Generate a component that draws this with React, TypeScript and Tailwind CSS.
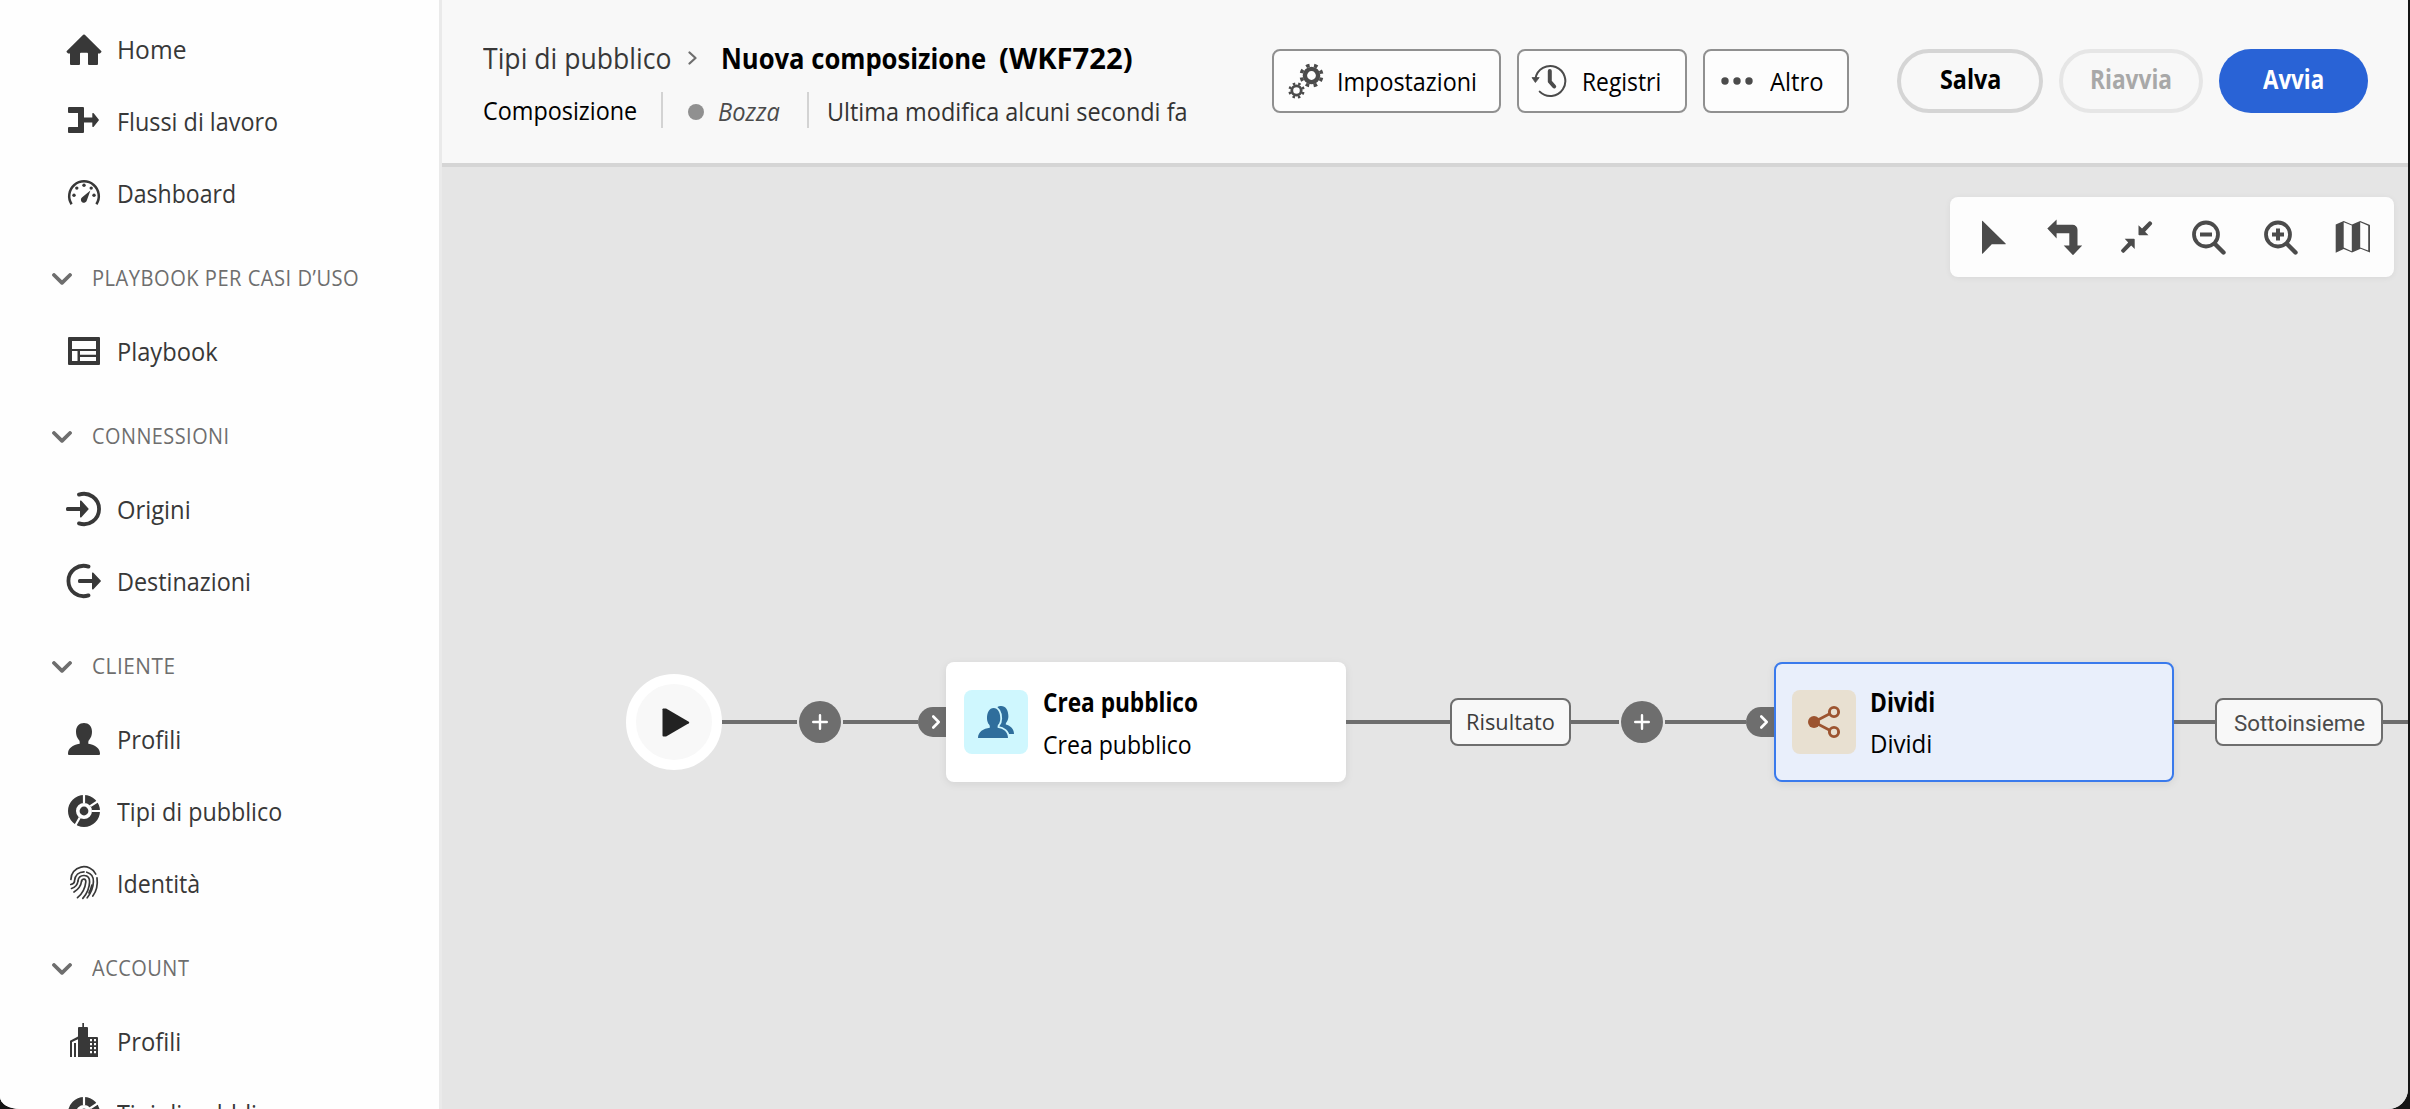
import { useLayoutEffect, useRef, useState, type ReactNode } from "react";

/** One line of text, condensed or expanded to fill the width of its box. */
function Fit({ children, className = "" }: { children: string; className?: string }) {
  const outer = useRef<HTMLSpanElement>(null);
  const inner = useRef<HTMLSpanElement>(null);
  const [scale, setScale] = useState(1);
  useLayoutEffect(() => {
    const measure = () => {
      if (outer.current && inner.current && inner.current.offsetWidth) {
        setScale(outer.current.clientWidth / inner.current.offsetWidth);
      }
    };
    measure();
    document.fonts.ready.then(measure);
  }, []);
  return (
    <span ref={outer} className={`block shrink-0 whitespace-nowrap ${className}`}>
      <span ref={inner} className="inline-block origin-left" style={{ transform: `scaleX(${scale})` }}>
        {children}
      </span>
    </span>
  );
}

function Icon({ children, className = "size-9" }: { children: ReactNode; className?: string }) {
  return (
    <svg viewBox="0 0 36 36" className={`shrink-0 ${className}`} fill="currentColor" aria-hidden="true">
      {children}
    </svg>
  );
}

const HomeIcon = () => (
  <Icon>
    <path d="M17.200 3.800a1.100 1.100 0 0 1 1.600 0L35.200 20a.9.9 0 0 1 0 1.300l-1.300 1.200H32V33a1 1 0 0 1-1 1h-8a1 1 0 0 1-1-1V22.700a.9.9 0 0 0-.9-.9h-6.200a.9.9 0 0 0-.9.9V33a1 1 0 0 1-1 1H5a1 1 0 0 1-1-1V22.500H2.100L.8 21.300a.9.9 0 0 1 0-1.300z" />
  </Icon>
);

const WorkflowIcon = () => (
  <Icon>
    <path d="M3 4h14a1 1 0 0 1 1 1v9.500h8.300V10.800a.8.8 0 0 1 1.400-.6l5 6.200a1 1 0 0 1 0 1.200l-5 6.200a.8.8 0 0 1-1.400-.6V19.500H18V29a1 1 0 0 1-1 1H3a1 1 0 0 1-1-1v-4a1 1 0 0 1 1-1h9V10H3a1 1 0 0 1-1-1V5a1 1 0 0 1 1-1z" />
  </Icon>
);

const DashboardIcon = () => (
  <Icon>
    <path d="M5.600 29.200A14.800 14.800 0 1 1 30.400 29.200" fill="none" stroke="currentColor" strokeWidth="2.500" />
    <circle cx="8" cy="20.300" r="1.700" />
    <circle cx="10.800" cy="13.100" r="1.700" />
    <circle cx="18" cy="10.200" r="1.700" />
    <circle cx="25.200" cy="13.100" r="1.700" />
    <circle cx="28" cy="20.300" r="1.700" />
    <path d="M24.400 15.600 20.800 25.500a3 3 0 1 1-4.600-3.200z" />
  </Icon>
);

const PlaybookIcon = () => (
  <Icon>
    <path
      fillRule="evenodd"
      d="M3 4h30a1 1 0 0 1 1 1v26a1 1 0 0 1-1 1H3a1 1 0 0 1-1-1V5a1 1 0 0 1 1-1zM6 8v8h24V8zM6 18v10h5.500V18zM14 18v3.800h16V18zM14 24v4h16v-4z"
    />
  </Icon>
);

const SourcesIcon = () => (
  <Icon>
    <path d="M13 3.600A15.200 15.200 0 1 1 13 32.400" fill="none" stroke="currentColor" strokeWidth="3.800" strokeLinecap="round" />
    <path d="M1.500 16H14v-5.600a.8.800 0 0 1 1.400-.6l7 7.600a.9.9 0 0 1 0 1.200l-7 7.600a.8.800 0 0 1-1.400-.6V20H1.500A1.500 1.500 0 0 1 0 18.500v-1A1.500 1.500 0 0 1 1.500 16z" />
  </Icon>
);

const DestinationsIcon = () => (
  <Icon>
    <path d="M22.500 3.600A15.200 15.200 0 1 0 22.500 32.400" fill="none" stroke="currentColor" strokeWidth="3.800" strokeLinecap="round" />
    <path d="M13.500 16H26v-5.600a.8.800 0 0 1 1.400-.6l7.300 7.600a.9.9 0 0 1 0 1.200l-7.300 7.600a.8.800 0 0 1-1.400-.6V20H13.500a1.500 1.500 0 0 1-1.500-1.500v-1a1.500 1.500 0 0 1 1.500-1.500z" />
  </Icon>
);

const UserIcon = () => (
  <Icon>
    <path d="M22.300 22.800v-1.700c0-1 .3-1.600 1-2.400 1.700-2 2.700-5 2.700-8C26 5 22.600 2 18 2s-8 3-8 8.700c0 3 1 6 2.700 8 .7.800 1 1.400 1 2.400v1.700C6.500 24 2 27.500 2 32.500V33a1 1 0 0 0 1 1h30a1 1 0 0 0 1-1v-.5c0-5-4.600-8.600-11.700-9.700z" />
  </Icon>
);

const AudienceIcon = () => (
  <Icon>
    <circle cx="18" cy="18" r="12" fill="none" stroke="currentColor" strokeWidth="8" />
    <circle cx="18" cy="18" r="4.400" />
    <path d="M18 10V1M26 18h9M24.300 13.200 33 7.500M13.800 24.500 9 33" stroke="white" strokeWidth="2.200" />
  </Icon>
);

const FingerprintIcon = () => (
  <Icon>
    <g fill="none" stroke="currentColor" strokeWidth="1.700" strokeLinecap="round">
      <path d="M4.900 14.500A13 12.500 0 0 1 29.700 9" />
      <path d="M31 12.800c.8 6 .2 12.200-4.200 18.200" />
      <path d="M8.500 15.800C9 10 13 6.800 18 6.800M20.800 7.200c4.500 1.200 6.800 5 6.600 9.600-.2 5.600-2.400 11.200-6.200 16" />
      <path d="M4.800 19.500c2-.5 3.400-1.500 3.700-3" />
      <path d="M12 15.800c.4-3.400 3-5.400 6.200-5.300 3.500.2 5.500 2.800 5.400 6.400-.2 6-3 12-6.800 16.500" />
      <path d="M5.500 23.500c3.500-1 6-3.800 6.500-7.500" />
      <path d="M15.600 16c.2-1.300 1.200-2 2.400-1.900 1.300.1 2 1.200 1.800 2.900-.6 6-3.800 12-8.300 15.700" />
      <path d="M8 27c4.200-2.500 7-6.500 7.600-11" />
      <path d="M23 28c1.300-2.500 2.300-5 2.900-8" />
    </g>
  </Icon>
);

const BuildingIcon = () => (
  <Icon>
    <path
      fillRule="evenodd"
      d="M16.300 0h1.700v4h3a1 1 0 0 1 1 1v9h9a1 1 0 0 1 1 1v19H12V16.200L6 19v15H4V17.800L12 13.600V5a1 1 0 0 1 1-1h3.300zM24 16v2.200h2V16zm4 0v2.200h2V16zm-4 4v2.200h2V20zm4 0v2.200h2V20zm-4 4v2.200h2V24zm4 0v2.200h2V24zm-4 4v2.200h2V28zm4 0v2.200h2V28zM8 20h2v14H8z"
    />
  </Icon>
);

const SectionChevron = () => (
  <svg viewBox="0 0 20 12" className="h-3 w-5 shrink-0" fill="none" stroke="#6e6e6e" strokeWidth="3.800" strokeLinecap="round" strokeLinejoin="round">
    <path d="M2 2l8 7.800L18 2" />
  </svg>
);

function NavItem({ icon, label, width }: { icon: ReactNode; label: string; width: string }) {
  return (
    <li className="flex h-[72px] items-center gap-[15px] pl-[66px] text-[#383838]">
      {icon}
      <Fit className={width}>{label}</Fit>
    </li>
  );
}

function NavHeading({ label, width }: { label: string; width: string }) {
  return (
    <li className="mt-3.5 flex h-[72px] items-center gap-5 pl-[52px] text-[21px] tracking-wide text-[#6e6e6e]">
      <SectionChevron />
      <Fit className={width}>{label}</Fit>
    </li>
  );
}

function Sidebar() {
  return (
    <nav className="w-[442px] shrink-0 overflow-hidden border-r-[3px] border-[#eaeaea] bg-[#fefefe] pt-[13px] text-[26px]">
      <ul>
        <NavItem icon={<HomeIcon />} label="Home" width="w-[69px]" />
        <NavItem icon={<WorkflowIcon />} label="Flussi di lavoro" width="w-[161px]" />
        <NavItem icon={<DashboardIcon />} label="Dashboard" width="w-[119px]" />
        <NavHeading label="PLAYBOOK PER CASI D’USO" width="w-[267px]" />
        <NavItem icon={<PlaybookIcon />} label="Playbook" width="w-[101px]" />
        <NavHeading label="CONNESSIONI" width="w-[138px]" />
        <NavItem icon={<SourcesIcon />} label="Origini" width="w-[74px]" />
        <NavItem icon={<DestinationsIcon />} label="Destinazioni" width="w-[134px]" />
        <NavHeading label="CLIENTE" width="w-[83px]" />
        <NavItem icon={<UserIcon />} label="Profili" width="w-[64px]" />
        <NavItem icon={<AudienceIcon />} label="Tipi di pubblico" width="w-[165px]" />
        <NavItem icon={<FingerprintIcon />} label="Identità" width="w-[83px]" />
        <NavHeading label="ACCOUNT" width="w-[97px]" />
        <NavItem icon={<BuildingIcon />} label="Profili" width="w-[64px]" />
        <NavItem icon={<AudienceIcon />} label="Tipi di pubblico" width="w-[165px]" />
      </ul>
    </nav>
  );
}

const Gears = () => (
  <svg viewBox="0 0 36 36" className="size-9 shrink-0 text-[#4b4b4b]" fill="none" stroke="currentColor" aria-hidden="true">
    <circle cx="23.500" cy="12.500" r="6.600" strokeWidth="4.400" />
    <circle cx="23.500" cy="12.500" r="10.300" strokeWidth="3.400" strokeDasharray="3.600 4.490" strokeDashoffset="5.850" />
    <circle cx="8.500" cy="27.500" r="4.700" strokeWidth="2.800" />
    <circle cx="8.500" cy="27.500" r="7" strokeWidth="2.400" strokeDasharray="2.500 2.998" strokeDashoffset="4" />
  </svg>
);

const History = () => (
  <svg viewBox="0 0 36 36" className="size-9 shrink-0 text-[#4b4b4b]" fill="none" stroke="currentColor" aria-hidden="true">
    <path d="M4.500 15.500A15 15 0 1 1 8.700 28.600" strokeWidth="2" strokeLinecap="round" />
    <path d="M1 14.600h7.200L4.400 19.500z" fill="currentColor" strokeWidth=".8" strokeLinejoin="round" />
    <path d="M18.800 8v10.500l4.400 5" strokeWidth="4" strokeLinecap="round" strokeLinejoin="round" />
  </svg>
);

const More = () => (
  <svg viewBox="0 0 32 10" className="h-2.5 w-8 shrink-0 fill-[#4b4b4b]" aria-hidden="true">
    <circle cx="4" cy="5" r="3.700" />
    <circle cx="16" cy="5" r="3.700" />
    <circle cx="28" cy="5" r="3.700" />
  </svg>
);

function Header() {
  return (
    <header className="flex h-[167px] items-start border-b-4 border-[#d5d5d5] bg-[#f8f8f8] pt-[33px] pl-[41px] text-black">
      <div className="w-[789px] shrink-0">
        <div className="flex h-[50px] items-center text-[29px]">
          <Fit className="w-[188px] text-[#383838]">Tipi di pubblico</Fit>
          <svg viewBox="0 0 9 14" className="ml-[17px] h-3.5 w-[9px]" fill="none" stroke="#6e6e6e" strokeWidth="2.200" strokeLinecap="round" strokeLinejoin="round">
            <path d="M1.500 1.500 7.500 7l-6 5.500" />
          </svg>
          <Fit className="ml-6 w-[265px] font-bold">Nuova composizione</Fit>
          <Fit className="ml-[13px] w-[134px] font-bold">(WKF722)</Fit>
        </div>
        <div className="mt-[7px] flex h-10 items-center text-[25.500px]">
          <Fit className="w-[154px]">Composizione</Fit>
          <span className="ml-6 h-9 w-0.5 bg-[#d3d3d3]" />
          <span className="mt-1 ml-[25px] size-4 rounded-full bg-[#909090]" />
          <Fit className="ml-3.5 w-[62px] pt-0.5 text-[#4b4b4b] italic">Bozza</Fit>
          <span className="ml-[27px] h-9 w-0.5 bg-[#d3d3d3]" />
          <Fit className="ml-[18px] w-[361px] pt-1 text-[25px] text-[#333]">Ultima modifica alcuni secondi fa</Fit>
        </div>
      </div>
      <div className="mt-4 flex text-[26px]">
        <button className="flex h-16 w-[229px] items-center rounded-lg border-2 border-[#909090] bg-[#fdfdfd] pl-3.5">
          <Gears />
          <Fit className="ml-[13px] w-[140px]">Impostazioni</Fit>
        </button>
        <button className="ml-4 flex h-16 w-[170px] items-center rounded-lg border-2 border-[#909090] bg-[#fdfdfd] pl-3">
          <History />
          <Fit className="ml-[15px] w-[79px]">Registri</Fit>
        </button>
        <button className="ml-4 flex h-16 w-[146px] items-center rounded-lg border-2 border-[#909090] bg-[#fdfdfd] pl-4">
          <More />
          <Fit className="ml-[17px] w-[54px]">Altro</Fit>
        </button>
        <button className="ml-12 flex h-16 w-[146px] items-center justify-center rounded-full border-4 border-[#d5d5d5] pb-1 font-bold">
          <Fit className="w-[61px]">Salva</Fit>
        </button>
        <button className="ml-4 flex h-16 w-36 items-center justify-center rounded-full border-4 border-[#e6e6e6] pb-1 font-bold text-[#a8a8a8]">
          <Fit className="w-[82px]">Riavvia</Fit>
        </button>
        <button className="ml-4 flex h-16 w-[149px] items-center justify-center rounded-full bg-[#2963d6] pb-1 font-bold text-white">
          <Fit className="w-[61px]">Avvia</Fit>
        </button>
      </div>
    </header>
  );
}

function Magnifier({ plus = false }: { plus?: boolean }) {
  return (
    <Icon>
      <circle cx="15" cy="15.500" r="12" fill="none" stroke="currentColor" strokeWidth="3.800" />
      <path d="M24 25l8.500 8.500" stroke="currentColor" strokeWidth="4.400" strokeLinecap="round" />
      <path d={plus ? "M9 13.500h4v-4h4v4h4v4h-4v4h-4v-4H9z" : "M9 13.500h12v4H9z"} />
    </Icon>
  );
}

function Toolbar() {
  const tools: ReactNode[] = [
    <Icon>
      <path d="M7 2.200v32c0 .6.400.7.800.3l9-9.300h13.500c.5 0 .7-.5.300-.8L7.700 1.900c-.4-.4-.7-.2-.7.300z" />
    </Icon>,
    <Icon>
      <path d="M.3 9.600 9.600.5v5.300H25.500a5 5 0 0 1 5 5V26.500h4.700L26 36.200 16.700 26.500h5.600V14.300H9.600V19.500z" />
    </Icon>,
    <Icon>
      <path d="M19.500 6.200v9.300a.8.800 0 0 0 .8.800h9.200l-3.400-3.600 6.700-7.300a1.300 1.300 0 0 0 0-1.800l-1-1a1.300 1.300 0 0 0-1.800 0l-7 7zM15.700 30V20.600a.8.800 0 0 0-.8-.8H5.700l3.500 3.700-6.800 7.200a1.300 1.300 0 0 0 0 1.800l1 1a1.300 1.300 0 0 0 1.800 0l7-7z" />
    </Icon>,
    <Magnifier />,
    <Magnifier plus />,
    <Icon>
      <path
        fillRule="evenodd"
        d="M.7 5.600 8.700 1.900 17 5.400l8.200-3.500 9.300 3.800a.8.800 0 0 1 .5.700v27l-9.400-3.700-8.600 3.900-8.300-3.600L.7 33.700zM8.700 3.200V28.600L16.800 32.200V6.600zM25.200 3.300V28.400l8 3.200V6.700z"
      />
    </Icon>,
  ];
  return (
    <div className="flex h-20 items-center rounded-lg bg-[#fdfdfd] pr-[5px] pl-[7px] text-[#4b4b4b] shadow-[0_1px_6px_rgba(0,0,0,0.06)]">
      {tools.map((tool, i) => (
        <button key={i} className="flex w-[72px] items-center justify-center">
          {tool}
        </button>
      ))}
    </div>
  );
}

const Line = ({ width }: { width: string }) => <span className={`h-1 shrink-0 bg-[#6e6e6e] ${width}`} />;

const AddButton = () => (
  <button className="mx-0.5 flex size-[42px] shrink-0 items-center justify-center rounded-full bg-[#6e6e6e]">
    <svg viewBox="0 0 16 16" className="size-4" stroke="white" strokeWidth="2.400" strokeLinecap="round">
      <path d="M8 1.200v13.600M1.200 8h13.600" />
    </svg>
  </button>
);

const InputPort = () => (
  <span className="flex h-[30px] w-7 shrink-0 items-center rounded-l-full bg-[#6e6e6e] pl-3.5">
    <svg viewBox="0 0 8 14" className="h-3.5 w-2" fill="none" stroke="white" strokeWidth="2.600" strokeLinecap="round" strokeLinejoin="round">
      <path d="M1.300 1.500 6.700 7l-5.400 5.500" />
    </svg>
  </span>
);

const TwoUsersIcon = () => (
  <Icon>
    <path d="M27.800 20.600v-.8c0-.6.300-1 .7-1.500 1.200-1.500 1.900-3.700 1.900-6C30.400 6 27.500 2 23.200 2c-1.600 0-2.700.3-3.700 1.100l-1 18.900 9.500 6 .8 2H36c0-5-3.500-8.200-8.200-9.400z" />
    <path
      d="M19.600 23.700v-1.200c0-.8.200-1.300.7-1.900 1.300-1.600 2-3.900 2-6.200 0-6-2.500-10.400-6.700-10.400S9 8.400 9 14.400c0 2.300.8 4.600 2.100 6.200.5.600.7 1.100.7 1.900v1.200C5.500 24.500 0 27.800 0 34h30c0-6.200-4.600-9.500-10.400-10.300z"
      stroke="#cff7fe"
      strokeWidth="3.600"
      paintOrder="stroke"
    />
  </Icon>
);

function Canvas() {
  return (
    <main className="flex-1 overflow-hidden bg-[#e5e5e5] pt-[30px]">
      <div className="flex justify-end pr-3.5">
        <Toolbar />
      </div>
      <div className="mt-[385px] flex h-[120px] items-center pl-[184px] text-[26px] text-black">
        <div className="flex size-24 shrink-0 items-center justify-center rounded-full border-10 border-white bg-[#f8f8f8]">
          <svg viewBox="0 0 28 29" className="ml-[3px] h-[29px] w-7" fill="#222222">
            <path d="M.5 1.300C.5.700 1 .4 1.500.4h2.600l22.700 13.300a1 1 0 0 1 0 1.600L4.100 28.600H1.500a1 1 0 0 1-1-1z" />
          </svg>
        </div>
        <Line width="w-[75px]" />
        <AddButton />
        <Line width="w-[75px]" />
        <InputPort />
        <section className="flex h-[120px] w-[400px] shrink-0 items-center gap-[15px] rounded-lg bg-white pl-[18px] shadow-[0_2px_8px_rgba(0,0,0,0.08)]">
          <span className="flex size-16 shrink-0 items-center justify-center rounded-lg bg-[#cff7fe] text-[#2f6e9c]">
            <TwoUsersIcon />
          </span>
          <div className="flex flex-col gap-[7px] pt-0.5">
            <Fit className="w-[155px] leading-[35px] font-bold">Crea pubblico</Fit>
            <Fit className="w-[149px] leading-[35px]">Crea pubblico</Fit>
          </div>
        </section>
        <Line width="w-[104px]" />
        <span className="flex h-12 w-[121px] shrink-0 items-center justify-center rounded-lg border-2 border-[#6e6e6e] bg-[#f8f8f8] text-[22.500px] text-[#3c3c3c]">
          <Fit className="w-[89px]">Risultato</Fit>
        </span>
        <Line width="w-12" />
        <AddButton />
        <Line width="w-[81px]" />
        <InputPort />
        <section className="flex h-[120px] w-[400px] shrink-0 items-center gap-3.5 rounded-lg border-2 border-[#3a7aec] bg-[#e9effb] pl-4 shadow-[0_2px_8px_rgba(0,0,0,0.08)]">
          <span className="flex size-16 shrink-0 items-center justify-center rounded-lg bg-[#e8e0d1] text-[#9c5430]">
            <Icon>
              <path d="M8 18 28 7.500M8 18l20 10.500" stroke="currentColor" strokeWidth="2.600" />
              <circle cx="8" cy="18" r="6" />
              <circle cx="28" cy="8" r="4.600" fill="#e8e0d1" stroke="currentColor" strokeWidth="2.900" />
              <circle cx="28" cy="28" r="4.600" fill="#e8e0d1" stroke="currentColor" strokeWidth="2.900" />
            </Icon>
          </span>
          <div className="flex flex-col gap-1.5 pt-0.5">
            <Fit className="w-[65px] leading-[35px] font-bold">Dividi</Fit>
            <Fit className="w-[62px] leading-[35px]">Dividi</Fit>
          </div>
        </section>
        <Line width="w-[41px]" />
        <span className="flex h-12 w-[168px] shrink-0 items-center justify-center rounded-lg border-2 border-[#6e6e6e] bg-[#f8f8f8] pt-0.5 font-['Roboto',sans-serif] text-[22px] text-[#4b4b4b]">
          <Fit className="w-[131px]">Sottoinsieme</Fit>
        </span>
        <Line width="w-[25px]" />
      </div>
    </main>
  );
}

export default function App() {
  return (
    <div className="h-[1109px] w-[2410px] overflow-hidden bg-[#151515] font-['Open_Sans','Noto_Sans',sans-serif]">
      <div className="flex h-full w-[2408px] overflow-hidden rounded-br-[20px] rounded-bl-[20px_12px] bg-[#e5e5e5]">
        <Sidebar />
        <div className="flex min-w-0 flex-1 flex-col">
          <Header />
          <Canvas />
        </div>
      </div>
    </div>
  );
}
